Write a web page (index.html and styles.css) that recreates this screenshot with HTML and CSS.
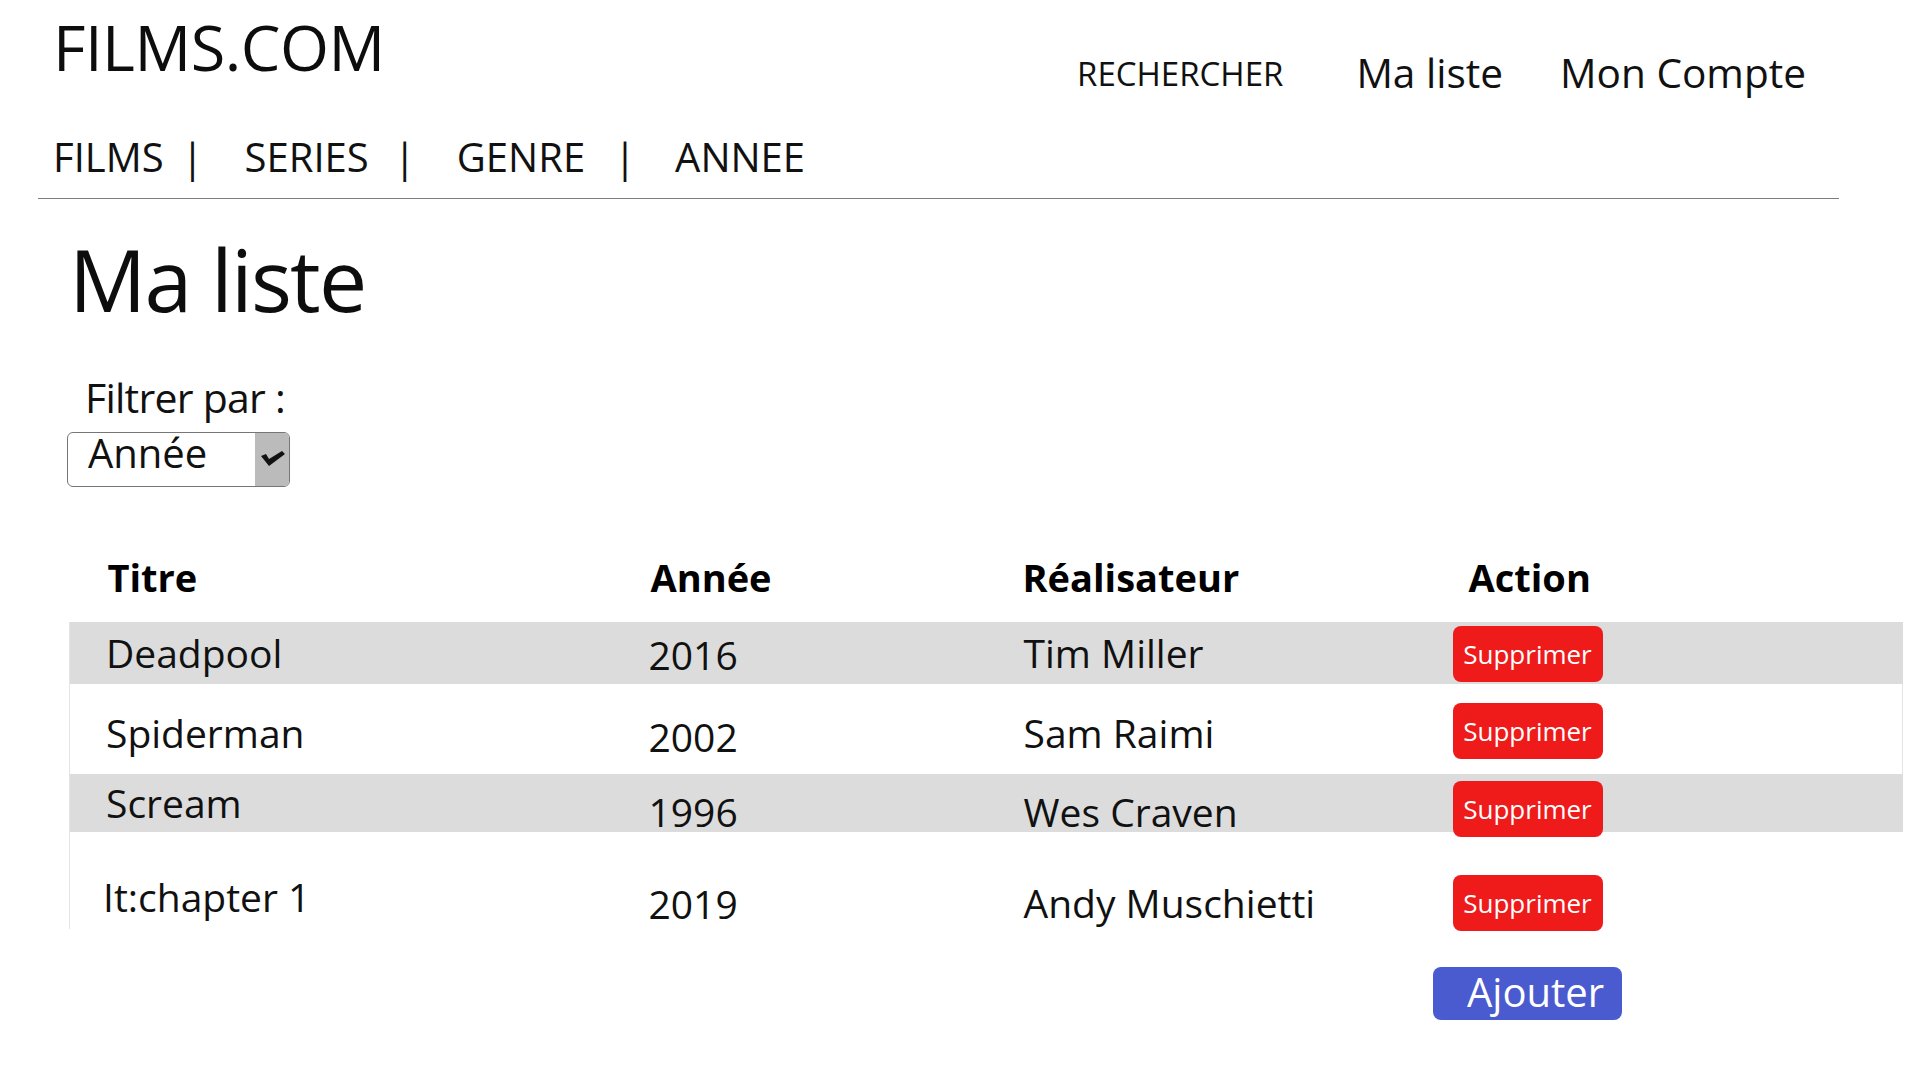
FILE: index.html
```html
<!DOCTYPE html>
<html lang="fr">
<head>
<meta charset="utf-8">
<title>FILMS.COM - Ma liste</title>
<link rel="stylesheet" href="styles.css">
</head>
<body>
<header class="site-header">
  <div class="top-row">
    <div class="logo">FILMS.COM</div>
    <nav class="account-nav">
      <a class="search-link" href="#">RECHERCHER</a>
      <a class="account-link list-link" href="#">Ma liste</a>
      <a class="account-link compte-link" href="#">Mon Compte</a>
    </nav>
  </div>
  <nav class="cat-nav">
    <a href="#">FILMS</a><span class="sep sep-1">|</span><a href="#">SERIES</a><span class="sep sep-2">|</span><a href="#">GENRE</a><span class="sep sep-3">|</span><a href="#">ANNEE</a>
  </nav>
</header>

<main class="content">
  <h1 class="page-title">Ma liste</h1>
  <div class="filter">
    <label class="filter-label">Filtrer par :</label>
    <div class="select">
      <span class="select-value">Année</span>
      <span class="select-arrow">
        <svg width="34" height="53" viewBox="0 0 34 53"><path d="M6 23 L11 21 L14 26 L27 18 L30 21 L14 33 Z" fill="#111"/></svg>
      </span>
    </div>
  </div>

  <table class="films">
    <colgroup>
      <col class="c-title"><col class="c-year"><col class="c-dir"><col class="c-act">
    </colgroup>
    <thead>
      <tr>
        <th class="col-title">Titre</th>
        <th class="col-year">Année</th>
        <th class="col-dir">Réalisateur</th>
        <th class="col-act">Action</th>
      </tr>
    </thead>
    <tbody>
      <tr class="row r1 shaded">
        <td class="col-title">Deadpool</td>
        <td class="col-year">2016</td>
        <td class="col-dir">Tim Miller</td>
        <td class="col-act"><button class="btn-delete">Supprimer</button></td>
      </tr>
      <tr class="row r2">
        <td class="col-title">Spiderman</td>
        <td class="col-year">2002</td>
        <td class="col-dir">Sam Raimi</td>
        <td class="col-act"><button class="btn-delete">Supprimer</button></td>
      </tr>
      <tr class="row r3 shaded">
        <td class="col-title">Scream</td>
        <td class="col-year">1996</td>
        <td class="col-dir">Wes Craven</td>
        <td class="col-act"><button class="btn-delete">Supprimer</button></td>
      </tr>
      <tr class="row r4">
        <td class="col-title">It:chapter 1</td>
        <td class="col-year">2019</td>
        <td class="col-dir">Andy Muschietti</td>
        <td class="col-act"><button class="btn-delete">Supprimer</button></td>
      </tr>
    </tbody>
  </table>

  <div class="add-row">
    <button class="btn-add">Ajouter</button>
  </div>
</main>
</body>
</html>
```

FILE: styles.css
```css
* { box-sizing: border-box; }

html, body {
  margin: 0;
  padding: 0;
  background: #ffffff;
  color: #111111;
  font-family: "Open Sans", "Noto Sans", "Liberation Sans", sans-serif;
}

a { color: inherit; text-decoration: none; }

/* ---------- header ---------- */
.site-header {
  margin: 0 81px 0 38px;
  padding: 15px 33px 21px 15px;
  border-bottom: 1px solid #7d7d7d;
}

.top-row {
  display: flex;
  justify-content: space-between;
  align-items: flex-start;
}

.logo {
  font-size: 63px;
  line-height: 63px;
  letter-spacing: -0.5px;
  color: #0d0d0d;
}

.account-nav {
  display: flex;
  align-items: flex-start;
}

.search-link {
  font-size: 33px;
  line-height: 33px;
  margin-top: 42px;
}

.account-link {
  font-size: 40.6px;
  line-height: 40px;
  margin-top: 38px;
}

.list-link { margin-left: 73px; }
.compte-link { margin-left: 57px; }

.cat-nav {
  display: flex;
  align-items: flex-start;
  margin-top: 44px;
  font-size: 40px;
  line-height: 40px;
}

.sep { display: inline-block; }
.sep-1 { margin: 0 41px 0 18px; }
.sep-2 { margin: 0 41px 0 25px; }
.sep-3 { margin: 0 39px 0 29px; }

/* ---------- content ---------- */
.content {
  padding: 0 0 0 63px;
}

.page-title {
  margin: 37px 0 0 6px;
  font-size: 86px;
  line-height: 86px;
  font-weight: 400;
  letter-spacing: -1.8px;
  color: #0d0d0d;
}

.filter {
  display: flex;
  flex-direction: column;
  align-items: flex-start;
}

.filter-label {
  margin: 55px 0 0 22px;
  font-size: 41px;
  line-height: 41px;
  letter-spacing: -0.75px;
}

.select {
  margin: 14px 0 0 4px;
  width: 223px;
  height: 55px;
  border: 1px solid #767676;
  border-radius: 6px;
  display: flex;
  justify-content: space-between;
  align-items: stretch;
}

.select-value {
  padding-left: 20px;
  font-size: 40px;
  line-height: 40px;
}

.select-arrow {
  width: 34px;
  background: #bbbbbb;
  border-radius: 0 5px 5px 0;
  display: flex;
}

/* ---------- table ---------- */
.films {
  margin: 51px 0 0 6px;
  width: 1833px;
  border-collapse: collapse;
  table-layout: fixed;
}

.c-title { width: 579px; }
.c-year { width: 374px; }
.c-dir { width: 430px; }
.c-act { width: 450px; }

.films th {
  padding: 20px 0 26px 0;
  text-align: left;
  font-size: 38px;
  line-height: 38px;
  font-weight: 700;
  color: #000;
}

.films th.col-title { padding-left: 38px; }
.films th.col-year { padding-left: 2px; }
.films th.col-dir { padding-left: 0; }
.films th.col-act { padding-left: 16px; }

.films td {
  padding: 0;
  vertical-align: top;
  font-size: 39px;
  line-height: 39px;
  color: #111;
}

.films td.col-title {
  padding-left: 36px;
  border-left: 1px solid #e4e4e4;
}

.films td.col-dir { padding-left: 1px; }

.row.shaded { background: #dcdcdc; }
.r2 td.col-act { border-right: 1px solid #e4e4e4; }

/* per-row vertical offsets */
.r1 td { padding-top: 11px; }
.r1 td.col-year { padding-top: 13px; }
.r1 td.col-act { padding: 4px 0 2px 0; }

.r2 td { padding-top: 29px; }
.r2 td.col-year { padding-top: 33px; }
.r2 td.col-act { padding: 19px 0 15px 0; }

.r3 td { padding-top: 18px; }
.r3 td.col-title { padding-top: 9px; }
.r3 td.col-act { padding: 7px 0 0 0; }
.r3 .btn-delete { margin-bottom: -5px; }

.r4 td { padding-top: 51px; }
.r4 td.col-title { padding-top: 45px; padding-left: 33px; }
.r4 td.col-year { padding-top: 52px; }
.r4 td.col-act { padding: 43px 0 0 0; }
.r4 .btn-delete { margin-bottom: -2px; }

.btn-delete {
  display: block;
  width: 150px;
  height: 56px;
  border: none;
  border-radius: 8px;
  background: #ef1a1a;
  color: #ffffff;
  font-family: "Open Sans", "Noto Sans", "Liberation Sans", sans-serif;
  font-size: 26px;
  line-height: 26px;
  padding: 0;
  cursor: pointer;
}

/* ---------- add ---------- */
.add-row {
  margin-top: 38px;
  padding-left: 1370px;
}

.btn-add {
  display: block;
  width: 189px;
  height: 53px;
  padding: 5px 0 8px 34px;
  border: none;
  border-radius: 8px;
  background: #4a5acf;
  color: #ffffff;
  text-align: left;
  font-family: "Open Sans", "Noto Sans", "Liberation Sans", sans-serif;
  font-size: 40px;
  line-height: 40px;
  cursor: pointer;
}
```
